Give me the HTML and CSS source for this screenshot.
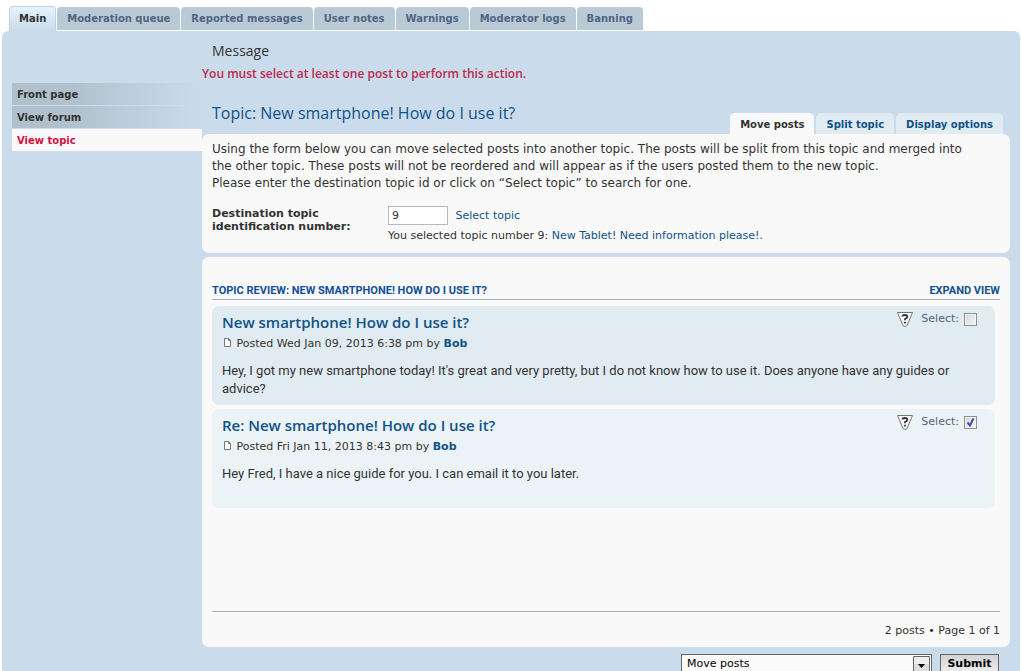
FILE: index.html
```html
<!DOCTYPE html>
<html lang="en">
<head>
	<meta charset="UTF-8">
	<meta name="viewport" content="width=device-width, initial-scale=1">
	<title>Moderator Control Panel</title>
	<link rel="stylesheet" href="styles.css">
</head>
<body>
	<nav class="tabs">
		<a class="active" href="#main">Main</a>
		<a href="#queue">Moderation queue</a>
		<a href="#reports">Reported messages</a>
		<a href="#notes">User notes</a>
		<a href="#warn">Warnings</a>
		<a href="#logs">Moderator logs</a>
		<a href="#ban">Banning</a>
	</nav>

	<div class="cp">
		<nav class="menu">
			<a href="#front">Front page</a>
			<a href="#forum">View forum</a>
			<a class="active" href="#topic">View topic</a>
		</nav>

		<form class="main" onsubmit="return false;">
			<h2>Message</h2>
			<p class="error">You must select at least one post to perform this action.</p>

			<div class="topic-head">
				<h2><a href="#topic">Topic: New smartphone! How do I use it?</a></h2>
				<nav class="minitabs">
					<a class="active" href="#move">Move posts</a>
					<a href="#split">Split topic</a>
					<a href="#display">Display options</a>
				</nav>
			</div>

			<section class="panel move">
				<p>Using the form below you can move selected posts into another topic. The posts will be split from this topic and merged into<br>the other topic. These posts will not be reordered and will appear as if the users posted them to the new topic.<br>Please enter the destination topic id or click on “Select topic” to search for one.</p>
				<div class="field">
					<label for="to_topic_id">Destination topic identification number:</label>
					<div>
						<input id="to_topic_id" class="inputbox" type="text" value="9">
						<a href="#select">Select topic</a>
						<div class="selected">You selected topic number 9: <a href="#tablet">New Tablet! Need information please!</a>.</div>
					</div>
				</div>
			</section>

			<section class="panel review">
				<div class="review-head">
					<h3>Topic review: New smartphone! How do I use it?</h3>
					<a href="#expand">Expand view</a>
				</div>

				<div class="posts">
					<article class="post">
						<div class="post-tools">
							<a href="#info1" aria-label="Post details">
								<svg width="18" height="17" viewBox="0 0 18 17">
									<path d="M1.500 1.500h15l-5.500 13q-2 2-4 0z" fill="#fafafa" stroke="#777" />
									<path d="M6.500 5.500Q6.500 4 8.900 4T11.300 5.700Q11.300 7 9 8v1.300M9 10.800v1.700" fill="none" stroke="#333" stroke-width="1.800" />
								</svg>
							</a>
							<label for="post1">Select:</label>
							<input id="post1" type="checkbox">
						</div>
						<h4><a href="#post1">New smartphone! How do I use it?</a></h4>
						<p class="author">
							<svg width="11" height="9" viewBox="0 0 11 9">
								<path d="M2.500.5h4l2 2v6h-6z" fill="#fff" stroke="#777" />
								<path d="M6.500.5v2h2" fill="none" stroke="#777" />
							</svg>
							Posted Wed Jan 09, 2013 6:38 pm by <a href="#bob">Bob</a>
						</p>
						<div class="content">Hey, I got my new smartphone today! It's great and very pretty, but I do not know how to use it. Does anyone have any guides or advice?</div>
					</article>

					<article class="post alt">
						<div class="post-tools">
							<a href="#info2" aria-label="Post details">
								<svg width="18" height="17" viewBox="0 0 18 17">
									<path d="M1.500 1.500h15l-5.500 13q-2 2-4 0z" fill="#fafafa" stroke="#777" />
									<path d="M6.500 5.500Q6.500 4 8.900 4T11.300 5.700Q11.300 7 9 8v1.300M9 10.800v1.700" fill="none" stroke="#333" stroke-width="1.800" />
								</svg>
							</a>
							<label for="post2">Select:</label>
							<input id="post2" type="checkbox" checked>
						</div>
						<h4><a href="#post2">Re: New smartphone! How do I use it?</a></h4>
						<p class="author">
							<svg width="11" height="9" viewBox="0 0 11 9">
								<path d="M2.500.5h4l2 2v6h-6z" fill="#fff" stroke="#777" />
								<path d="M6.500.5v2h2" fill="none" stroke="#777" />
							</svg>
							Posted Fri Jan 11, 2013 8:43 pm by <a href="#bob">Bob</a>
						</p>
						<div class="content">Hey Fred, I have a nice guide for you. I can email it to you later.</div>
					</article>
				</div>

				<div class="pagination">2 posts • Page 1 of 1</div>
			</section>

			<div class="actions">
				<select aria-label="Action">
					<option>Move posts</option>
					<option>Split posts</option>
					<option>Delete posts</option>
				</select>
				<button type="submit">Submit</button>
			</div>
		</form>
	</div>
</body>
</html>
```
FILE: styles.css
```css
* {
	box-sizing: border-box;
	margin: 0;
	padding: 0;
}

html {
	background: #fff;
}

body {
	min-height: 100vh;
	padding: 6px 1px 0 2px;
	display: flex;
	flex-direction: column;
	font-family: Verdana, "DejaVu Sans", sans-serif;
	font-size: 11px;
	line-height: 14px;
	color: #333;
}

a {
	color: #105289;
	text-decoration: none;
}

a:hover {
	color: #d31141;
}

/* Section tabs */
.tabs {
	display: flex;
	align-items: flex-end;
	gap: 1px;
	padding-left: 7px;
}

.tabs a {
	height: 23px;
	margin-bottom: 1px;
	padding: 0 10px;
	border-radius: 4px 4px 0 0;
	background: #b9cad7;
	color: #536482;
	font-size: 10px;
	font-weight: bold;
	line-height: 24px;
}

.tabs a.active {
	height: 25px;
	margin-bottom: 0;
	border: 1px solid #c3d2df;
	border-bottom: 0;
	padding: 0 9px;
	background: linear-gradient(#e4f2fd, #cadceb);
	color: #333;
}

.cp {
	flex: 1;
	display: flex;
	align-items: flex-start;
	padding: 10px 10px 0;
	border-radius: 6px 6px 0 0;
	background: #cadceb;
}

/* Side menu */
.menu {
	flex: 0 0 190px;
	display: flex;
	flex-direction: column;
	gap: 1px;
	padding-top: 42px;
}

.menu a {
	height: 22px;
	padding: 0 5px;
	background: linear-gradient(to right, #b0c1cd 30%, #cadceb);
	color: #333;
	font-size: 10px;
	font-weight: bold;
	line-height: 23px;
}

.menu a.active {
	background: #f9f9f9;
	color: #d31141;
}

.main {
	flex: 1;
	min-width: 0;
}

h2 {
	padding-left: 10px;
	font-family: "Trebuchet MS", "Open Sans", sans-serif;
	font-size: 14px;
	font-weight: normal;
	line-height: 20px;
}

.error {
	margin-top: 4px;
	color: #bc2a4d;
	font-family: "Trebuchet MS", "Open Sans", sans-serif;
	font-size: 12px;
	font-weight: 600;
	line-height: 18px;
}

.topic-head {
	display: flex;
	justify-content: space-between;
	align-items: flex-end;
	margin-top: 20px;
	padding-right: 7px;
}

.topic-head h2 {
	padding-bottom: 11px;
	font-size: 16px;
}

.minitabs {
	display: flex;
	gap: 2px;
}

.minitabs a {
	height: 21px;
	padding: 0 10px;
	border-radius: 5px 5px 0 0;
	background: #e1ebf2;
	font-size: 10px;
	font-weight: bold;
	line-height: 23px;
}

.minitabs a.active {
	background: #f9f9f9;
	color: #333;
}

/* Panels */
.panel {
	padding: 7px 10px 10px;
	border-radius: 7px;
	background: #f9f9f9;
}

.move {
	margin-bottom: 4px;
}

.move p {
	font-size: 12px;
	line-height: 17px;
}

.field {
	display: flex;
	margin-top: 14px;
}

.field label {
	width: 176px;
	padding-top: 1px;
	font-weight: bold;
	line-height: 13px;
}

.inputbox {
	width: 60px;
	height: 19px;
	margin-right: 4px;
	padding: 2px 3px;
	border: 1px solid #b4bac0;
	background: #fff;
	color: #333;
	font: inherit;
}

.selected {
	margin-top: 4px;
}

.review {
	padding: 26px 10px 9px;
}

.review-head {
	display: flex;
	justify-content: space-between;
	border-bottom: 1px solid #a4b3bf;
	color: #115098;
	font-family: Roboto, sans-serif;
	font-size: 11px;
	font-weight: bold;
	line-height: 16px;
	text-transform: uppercase;
}

.review-head h3 {
	font-size: inherit;
}

.posts {
	display: flex;
	flex-direction: column;
	gap: 4px;
	min-height: 312px;
	padding: 6px 5px 0 0;
	border-bottom: 1px solid #a4b3bf;
}

.post {
	min-height: 99px;
	padding: 6px 10px;
	border-radius: 7px;
	background: #e1ebf2;
}

.post.alt {
	background: #ecf3f7;
}

.post h4 {
	font-family: "Trebuchet MS", "Open Sans", sans-serif;
	font-size: 15px;
	font-weight: 600;
	line-height: 20px;
}

.author {
	margin-top: 5px;
}

.author a {
	font-weight: bold;
}

.content {
	margin-top: 11px;
	font-family: "Trebuchet MS", Roboto, sans-serif;
	font-size: 13px;
	line-height: 18px;
}

.post-tools {
	float: right;
	display: flex;
	align-items: center;
	margin-top: -1px;
	padding-right: 8px;
	color: #536482;
}

.post-tools svg {
	display: block;
}

.post-tools label {
	margin: 0 5px 2px 7px;
}

.post-tools input {
	appearance: none;
	width: 13px;
	height: 13px;
	border: 1px solid #8e8f8f;
	background: linear-gradient(135deg, #d2d6da, #f6f6f6);
	box-shadow: inset 0 0 0 1px #f4f4f4;
}

.post-tools input:checked {
	background: url("data:image/svg+xml,%3Csvg xmlns='http://www.w3.org/2000/svg' viewBox='0 0 11 11'%3E%3Cpath d='M2.500 5.500l2.500 3 3.500-7' fill='none' stroke='%233c52a0' stroke-width='2'/%3E%3C/svg%3E"), linear-gradient(135deg, #d2d6da, #f6f6f6);
}

.pagination {
	margin-top: 12px;
	text-align: right;
}

.actions {
	display: flex;
	justify-content: flex-end;
	gap: 8px;
	margin-top: 7px;
	padding-right: 11px;
}

.actions select {
	appearance: none;
	width: 251px;
	height: 20px;
	padding: 0 20px 0 5px;
	border: 1px solid #666;
	background: url("data:image/svg+xml,%3Csvg xmlns='http://www.w3.org/2000/svg' width='17' height='17' viewBox='0 0 17 17'%3E%3Cpath d='M.5.5h16v16H.5z' fill='%23eee' stroke='%23666'/%3E%3Cpath d='M1 8h15v8H1z' fill='%23ddd'/%3E%3Cpath d='M5 8h7l-3.500 4z'/%3E%3C/svg%3E") right 1px center no-repeat #fafafa;
	color: #000;
	font: inherit;
}

.actions button {
	width: 59px;
	height: 20px;
	border: 1px solid #666;
	background: linear-gradient(#d2d2d2, #efefef);
	color: #000;
	font: inherit;
	font-weight: bold;
}
```
